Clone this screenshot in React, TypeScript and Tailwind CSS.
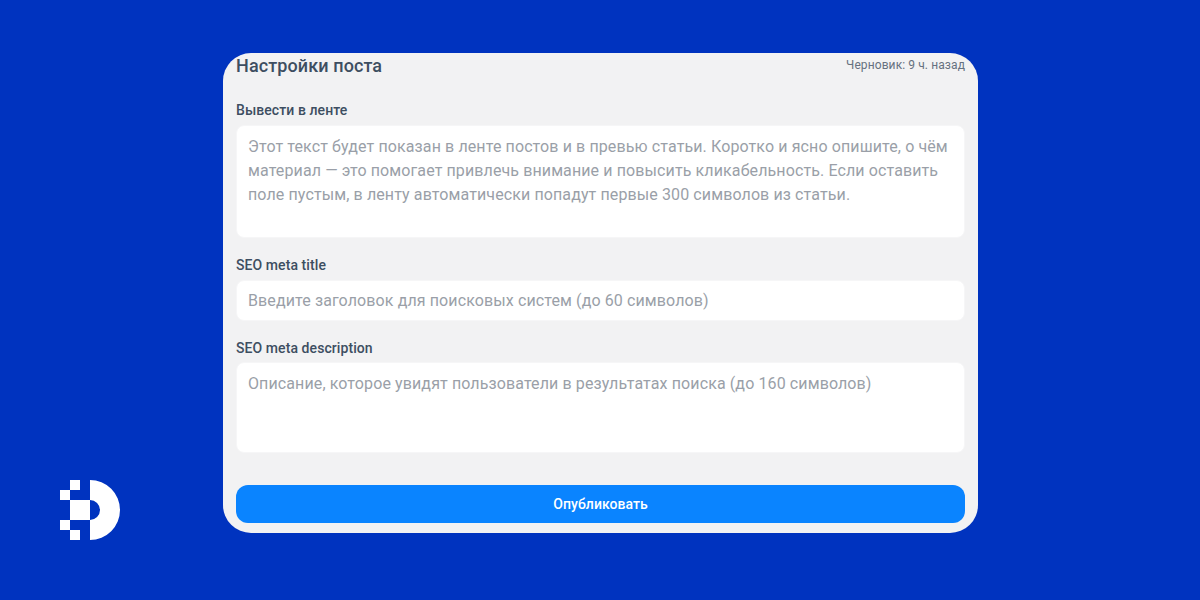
export default function App() {
  const font = { fontFamily: 'Roboto, sans-serif' };
  return (
    <div style={font} className="relative h-[600px] w-[1200px] overflow-hidden bg-[#0033bf] pt-[53px] pl-[223px]">
      <svg className="absolute left-[60px] top-[480px]" width="60" height="60" viewBox="0 0 60 60" fill="#fff">
        <rect x="10" y="0" width="10" height="10" />
        <rect x="0" y="10" width="10" height="10" />
        <rect x="10" y="20" width="20" height="20" />
        <rect x="0" y="40" width="10" height="10" />
        <rect x="10" y="50" width="10" height="10" />
        <path fillRule="evenodd" d="M30 0a30 30 0 0 1 0 60V40a10 10 0 0 0 0-20Z" />
      </svg>
      <div className="flex h-[480px] w-[755px] flex-col rounded-[28px] bg-[#f2f2f3] px-[13px]">
        <div className="flex h-[25px] items-center justify-between">
          <h1 className="text-lg leading-[25px] font-medium tracking-[0.11px] text-[#3d4e61]">Настройки поста</h1>
          <span className="text-xs leading-[25px] tracking-[0.1px] text-[#667180]">Черновик: 9 ч. назад</span>
        </div>
        <label className="mt-[22px] mb-[5px] text-sm leading-[20px] font-medium tracking-[0.08px] text-[#3d4e61]">Вывести в ленте</label>
        <textarea
          readOnly
          className="h-[113px] w-full resize-none rounded-lg border border-[#f6f6f7] bg-white px-[11px] py-[9px] text-base leading-6 tracking-[0.11px] outline-none placeholder:text-[#9a9fa8]"
          placeholder="Этот текст будет показан в ленте постов и в превью статьи. Коротко и ясно опишите, о чём материал — это помогает привлечь внимание и повысить кликабельность. Если оставить поле пустым, в ленту автоматически попадут первые 300 символов из статьи."
        />
        <label className="mt-[17px] mb-[5px] text-sm leading-[20px] font-medium tracking-[0.08px] text-[#3d4e61]">SEO meta title</label>
        <input
          readOnly
          className="h-[41px] w-full rounded-lg border border-[#f6f6f7] bg-white px-[11px] text-base tracking-[0.11px] outline-none placeholder:text-[#9a9fa8]"
          placeholder="Введите заголовок для поисковых систем (до 60 символов)"
        />
        <label className="mt-[17px] mb-[4px] text-sm leading-[20px] font-medium tracking-[0.08px] text-[#3d4e61]">SEO meta description</label>
        <textarea
          readOnly
          className="h-[91px] w-full resize-none rounded-lg border border-[#f6f6f7] bg-white px-[11px] py-[9px] text-base leading-6 tracking-[0.11px] outline-none placeholder:text-[#9a9fa8]"
          placeholder="Описание, которое увидят пользователи в результатах поиска (до 160 символов)"
        />
        <button className="mt-8 h-[38px] w-full rounded-xl bg-[#0a84ff] text-sm font-medium tracking-[0.05px] text-white">Опубликовать</button>
      </div>
    </div>
  );
}
